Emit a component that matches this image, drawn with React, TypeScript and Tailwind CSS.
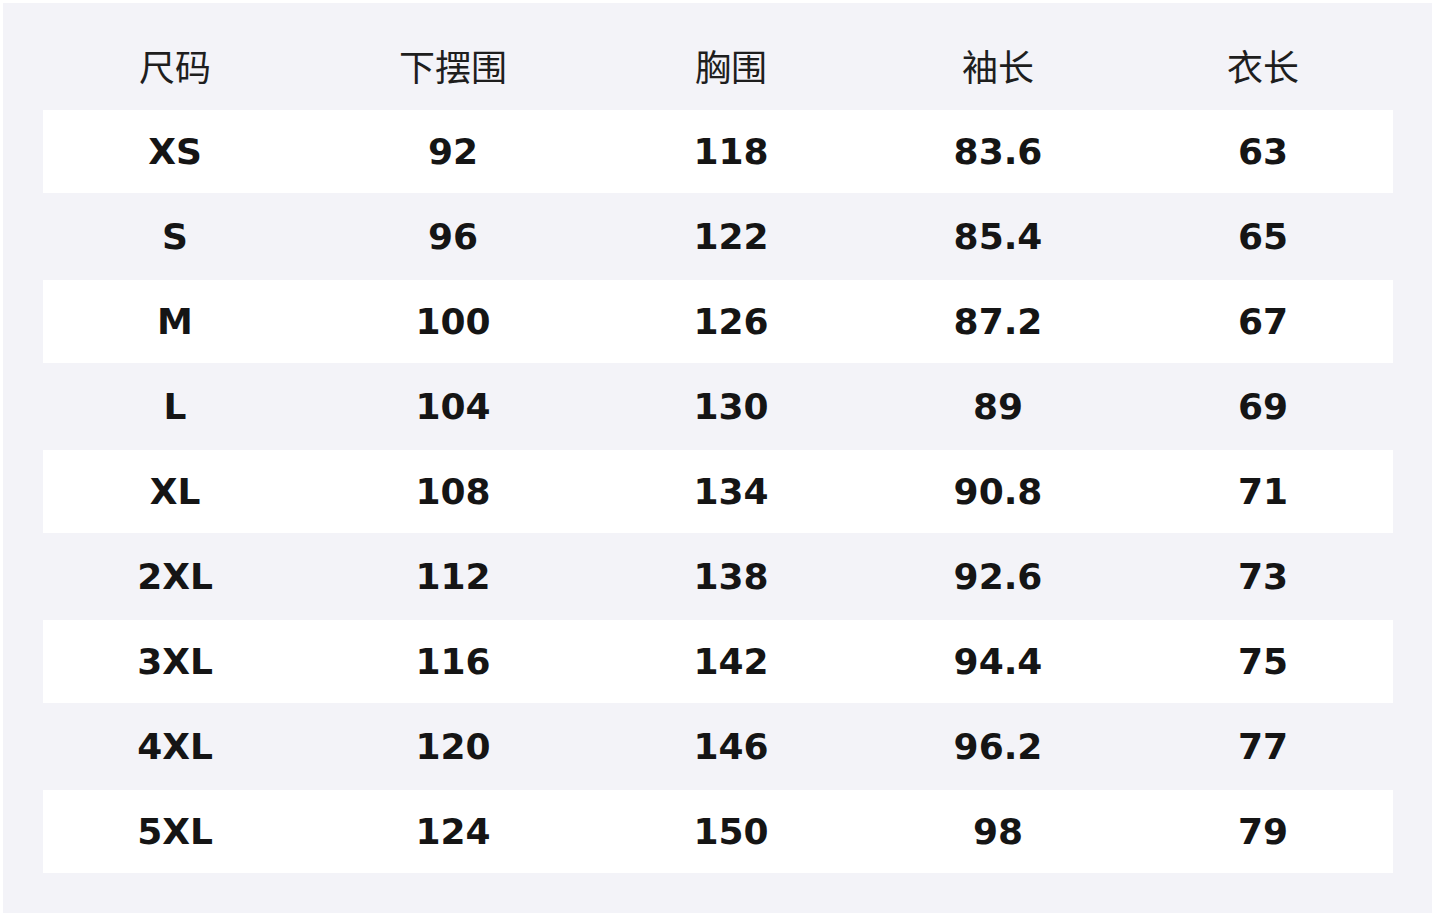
const headers = ['尺码', '下摆围', '胸围', '袖长', '衣长'];

const rows: (string | number)[][] = [
  ['XS', 92, 118, '83.6', 63],
  ['S', 96, 122, '85.4', 65],
  ['M', 100, 126, '87.2', 67],
  ['L', 104, 130, '89', 69],
  ['XL', 108, 134, '90.8', 71],
  ['2XL', 112, 138, '92.6', 73],
  ['3XL', 116, 142, '94.4', 75],
  ['4XL', 120, 146, '96.2', 77],
  ['5XL', 124, 150, '98', 79],
];

const cols = 'grid grid-cols-[264px_292px_264px_270px_260px]';

export default function App() {
  return (
    <div className="w-[1436px] h-[918px] bg-white p-[3px]">
      <div className="w-[1429px] h-[910px] bg-[#f3f3f8] pl-[40px] pr-[39px] pt-[22px]">
        <div className={`${cols} h-[85px] items-center text-[36px] text-[#1e1e1e] font-['Noto_Sans_CJK_SC',sans-serif]`}>
          {headers.map(h => (
            <div key={h} className="text-center leading-none pb-[5px]">{h}</div>
          ))}
        </div>
        {rows.map((r, i) => (
          <div
            key={i}
            className={`${cols} h-[85px] items-center border-b-2 border-[#f3f3f8] font-['DejaVu_Sans',sans-serif] font-bold text-[36px] text-[#151515] ${i % 2 === 0 ? 'bg-white' : 'bg-[#f3f3f8]'}`}
          >
            {r.map((c, j) => (
              <div key={j} className="text-center leading-none">{c}</div>
            ))}
          </div>
        ))}
      </div>
    </div>
  );
}
